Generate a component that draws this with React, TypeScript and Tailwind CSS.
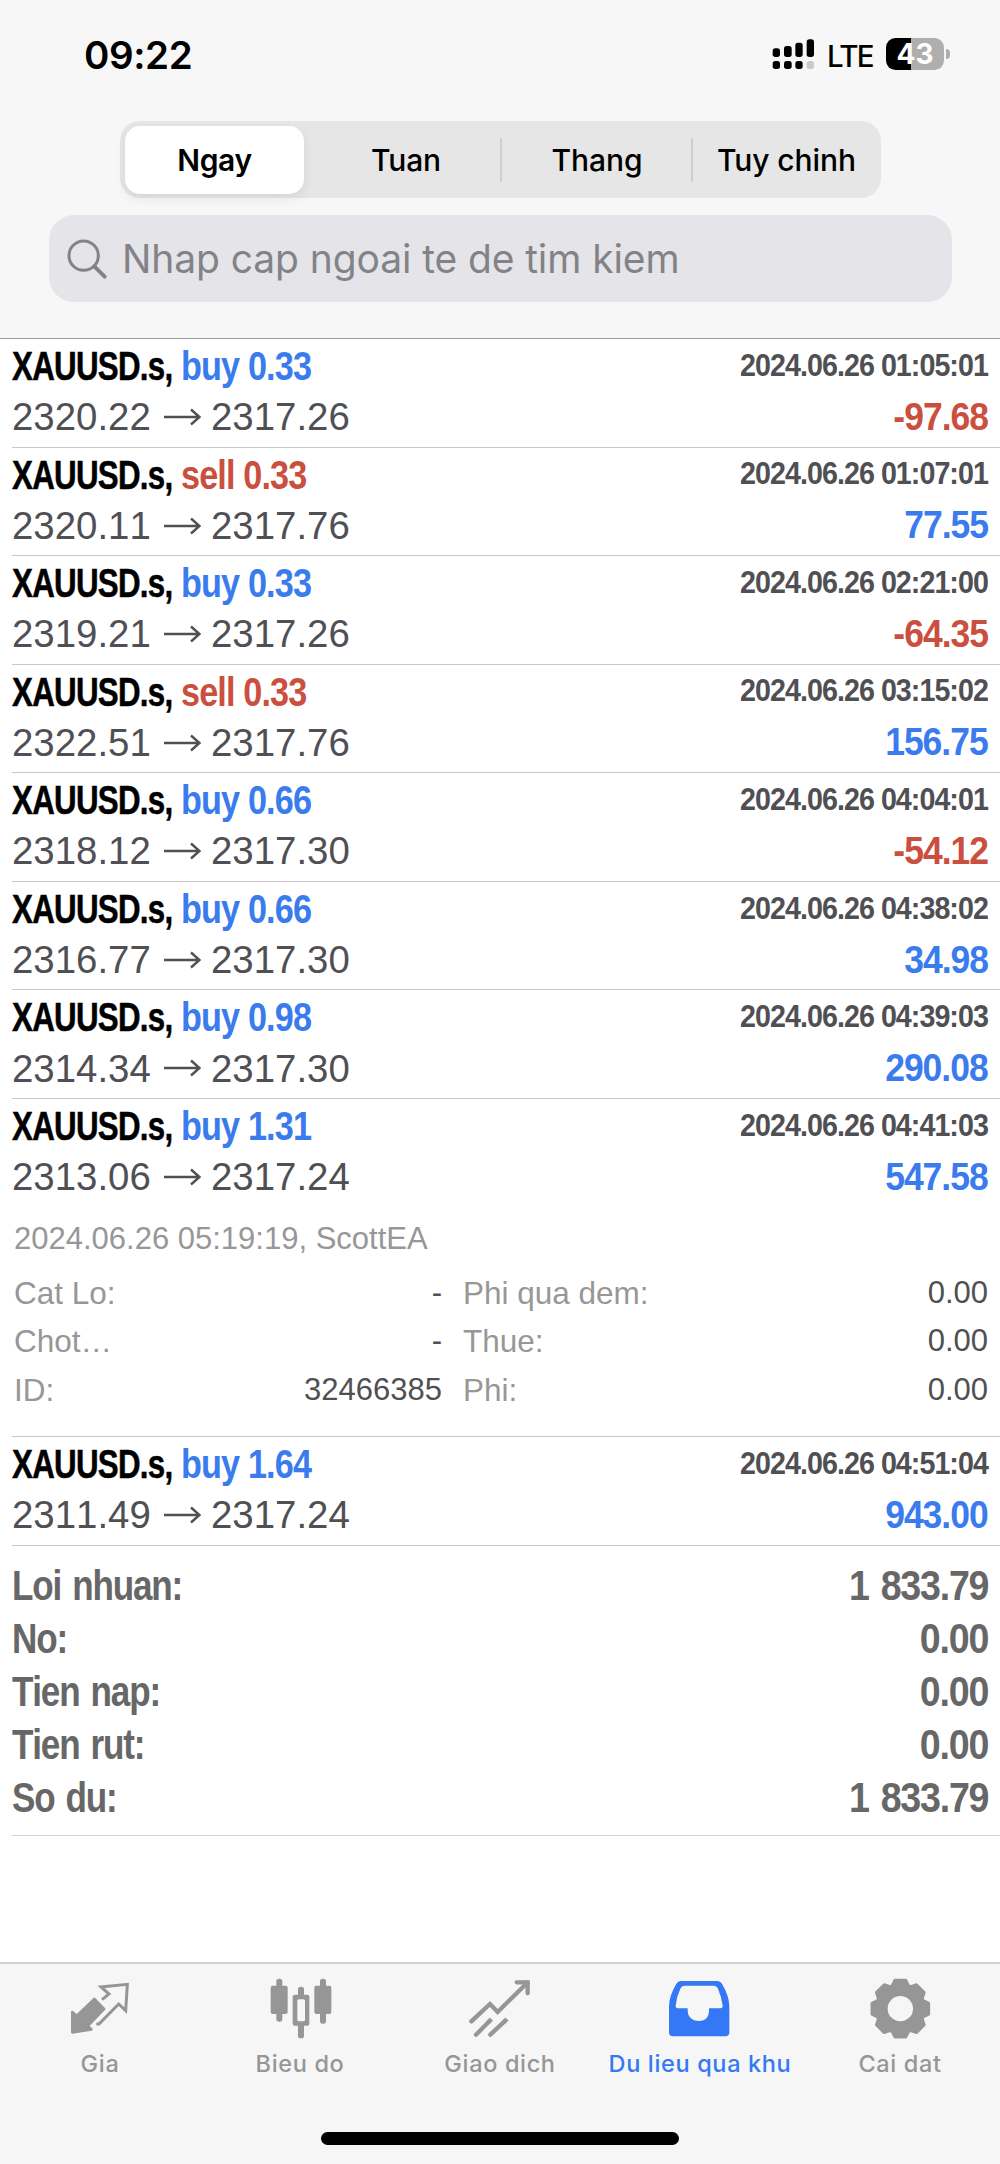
import clsx from "clsx";
import type { ReactNode } from "react";

interface Deal {
  side: "buy" | "sell";
  volume: string;
  open: string;
  close: string;
  time: string;
  profit: string;
  expanded?: boolean;
}

const deals: Deal[] = [
  { side: "buy", volume: "0.33", open: "2320.22", close: "2317.26", time: "2024.06.26 01:05:01", profit: "-97.68" },
  { side: "sell", volume: "0.33", open: "2320.11", close: "2317.76", time: "2024.06.26 01:07:01", profit: "77.55" },
  { side: "buy", volume: "0.33", open: "2319.21", close: "2317.26", time: "2024.06.26 02:21:00", profit: "-64.35" },
  { side: "sell", volume: "0.33", open: "2322.51", close: "2317.76", time: "2024.06.26 03:15:02", profit: "156.75" },
  { side: "buy", volume: "0.66", open: "2318.12", close: "2317.30", time: "2024.06.26 04:04:01", profit: "-54.12" },
  { side: "buy", volume: "0.66", open: "2316.77", close: "2317.30", time: "2024.06.26 04:38:02", profit: "34.98" },
  { side: "buy", volume: "0.98", open: "2314.34", close: "2317.30", time: "2024.06.26 04:39:03", profit: "290.08" },
  { side: "buy", volume: "1.31", open: "2313.06", close: "2317.24", time: "2024.06.26 04:41:03", profit: "547.58", expanded: true },
  { side: "buy", volume: "1.64", open: "2311.49", close: "2317.24", time: "2024.06.26 04:51:04", profit: "943.00" },
];

const details = [
  ["Cat Lo:", "-", "Phi qua dem:", "0.00"],
  ["Chot…", "-", "Thue:", "0.00"],
  ["ID:", "32466385", "Phi:", "0.00"],
];

const totals = [
  ["Loi nhuan:", "1 833.79"],
  ["No:", "0.00"],
  ["Tien nap:", "0.00"],
  ["Tien rut:", "0.00"],
  ["So du:", "1 833.79"],
];

// eight-tooth gear outline around (0, 0)
const gearPoints = Array.from({ length: 8 }, (_, i) =>
  [
    [-20, 73],
    [-11, 87],
    [11, 87],
    [20, 73],
  ].map(([deg, r]) => {
    const a = ((i * 45 + deg) * Math.PI) / 180;
    return `${(Math.sin(a) * r).toFixed(1)},${(-Math.cos(a) * r).toFixed(1)}`;
  })
)
  .flat()
  .join(" ");

function StatusBar() {
  return (
    <div className="flex h-[121px] items-start pl-[84px] pr-[50px]">
      <span className="mt-[31px] text-[38.5px] font-semibold leading-[48px] tracking-[-0.4px] text-black">09:22</span>
      <div className="ml-auto flex">
        <svg className="mt-[38px] h-[33px] w-[43px]" viewBox="814 114 129 99">
          <rect x="816" y="145" width="22" height="26" rx="8" />
          <rect x="850" y="138" width="23" height="33" rx="8" />
          <rect x="884" y="128" width="22" height="43" rx="8" />
          <rect x="918" y="118" width="22" height="53" rx="8" />
          <rect x="816" y="183" width="22" height="24" rx="8" />
          <rect x="850" y="183" width="23" height="24" rx="8" />
          <rect x="884" y="183" width="22" height="24" rx="8" />
          <rect x="918" y="183" width="22" height="24" rx="8" fill="#c9c9c9" />
        </svg>
        <span className="ml-[12px] mt-[36px] w-[59px] text-[29.5px] font-medium leading-[40px] tracking-[-1.7px] text-black">LTE</span>
        <div className="mt-[38px] flex h-[32px] items-center">
          <div className="flex h-[32px] w-[58px] items-center justify-center rounded-[9.5px] bg-linear-to-r from-black from-43% to-[#aeaeae] to-43% text-[28px] font-bold leading-none text-white">
            43
          </div>
          <div className="ml-[2px] h-[10px] w-[4px] rounded-r-full bg-[#aeaeae]" />
        </div>
      </div>
    </div>
  );
}

function PeriodTabs() {
  return (
    <div className="mx-auto flex h-[77px] w-[761px] items-center rounded-[20px] bg-[#e6e6e6] text-[30px] font-medium leading-none tracking-[-0.1px] text-black">
      <div className="ml-[5px] flex h-[68px] w-[179px] items-center justify-center rounded-[15px] bg-white pl-[1px] font-semibold tracking-[-0.4px] shadow-[0_4px_12px_rgba(0,0,0,0.08)]">
        Ngay
      </div>
      <div className="ml-[6px] flex h-[44px] w-[192px] items-center justify-center border-r-2 border-[#cfcfcf] pl-[3px]">Tuan</div>
      <div className="flex h-[44px] w-[191px] items-center justify-center border-r-2 border-[#cfcfcf] pl-[2px]">Thang</div>
      <div className="flex flex-1 items-center justify-center">Tuy chinh</div>
    </div>
  );
}

function SearchField() {
  return (
    <div className="ml-[49px] mr-[48px] mt-[17px] flex h-[87px] items-center rounded-[25px] bg-[#e5e5e9] pl-[17px]">
      <svg className="h-[42px] w-[42px]" viewBox="198 712 126 126" fill="none" stroke="#838387" strokeLinecap="round">
        <circle cx="251" cy="765" r="44" strokeWidth="9" />
        <path d="M283 797L314 828" strokeWidth="12" />
      </svg>
      <span className="ml-[14px] whitespace-nowrap text-[39px] leading-none tracking-[-0.1px] text-[#838387]">
        Nhap cap ngoai te de tim kiem
      </span>
    </div>
  );
}

function Arrow() {
  return (
    <svg className="ml-[12px] mr-[10px] h-[18px] w-[38px]" viewBox="0 0 38 18" fill="none" stroke="#505054" strokeWidth="2.4">
      <path d="M1 9H36M28 1.5L36.5 9L28 16.5" />
    </svg>
  );
}

function DealRow({ deal }: { deal: Deal }) {
  const loss = deal.profit.startsWith("-");
  return (
    <div
      className={clsx(
        "ml-[12px] border-b border-[#c8c8c8] pr-[12px] font-[Liberation_Sans,Arial,sans-serif] [font-kerning:none]",
        deal.expanded ? "h-[338px]" : "h-[108.57px]"
      )}
    >
      <div className="flex h-[53px] items-center whitespace-nowrap pt-[1px] font-bold">
        <span className="w-[169px] origin-left scale-x-[0.782] text-[40px] tracking-[-0.9px] text-black [-webkit-text-stroke:0.5px]">
          XAUUSD.s,
        </span>
        <span
          className={clsx(
            "origin-left scale-x-[0.855] text-[40px] tracking-[-1px]",
            deal.side === "buy" ? "text-[#3a7ced]" : "text-[#cb4f3f]"
          )}
        >
          {deal.side} {deal.volume}
        </span>
        <span className="ml-auto origin-right scale-x-[0.925] text-[31px] tracking-[-1.05px] text-[#505054]">
          {deal.time}
        </span>
      </div>
      <div className="flex h-[49px] items-center pt-[1px]">
        <span className="w-[139px] text-[38.4px] text-[#505054]">{deal.open}</span>
        <Arrow />
        <span className="text-[38.4px] text-[#505054]">{deal.close}</span>
        <span
          className={clsx(
            "ml-auto origin-right scale-x-[0.91] text-[39px] font-bold tracking-[-1.1px]",
            loss ? "text-[#cb4f3f]" : "text-[#3a7ced]"
          )}
        >
          {deal.profit}
        </span>
      </div>
      {deal.expanded && (
        <div className="mt-[11px] pl-[2px] text-[31px] text-[#979797]">
          <div className="mb-[3px] flex h-[54px] items-center">2024.06.26 05:19:19, ScottEA</div>
          {details.map(([leftLabel, leftValue, rightLabel, rightValue]) => (
            <div key={rightLabel} className="flex h-[48.5px] items-center">
              <span className="text-[31.5px]">{leftLabel}</span>
              <span className="ml-auto text-[#505054]">{leftValue}</span>
              <div className="ml-[21px] flex w-[525px] items-center justify-between">
                <span className="text-[31.5px]">{rightLabel}</span>
                <span className="text-[#505054]">{rightValue}</span>
              </div>
            </div>
          ))}
        </div>
      )}
    </div>
  );
}

function Totals() {
  return (
    <div className="ml-[12px] h-[290px] border-b border-[#d4d4d4] pr-[12px] pt-[14px] font-[Liberation_Sans,Arial,sans-serif] text-[42.5px] font-bold tracking-[-1.4px] text-[#676767] [font-kerning:none] [word-spacing:3px]">
      {totals.map(([label, value]) => (
        <div key={label} className="flex h-[53px] items-center justify-between">
          <span className="origin-left scale-x-[0.825]">{label}</span>
          <span className="origin-right scale-x-[0.885]">{value}</span>
        </div>
      ))}
    </div>
  );
}

function NavItem({ label, active, children }: { label: string; active?: boolean; children: ReactNode }) {
  return (
    <div className={clsx("flex w-1/5 flex-col items-center", active ? "text-[#3478f6]" : "text-[#969696]")}>
      <svg className="mt-[14px] h-[62px] w-[64px] overflow-visible" viewBox="-96 -93 192 186" fill="currentColor">
        {children}
      </svg>
      <span className="mt-[9px] whitespace-nowrap text-[23.5px] font-medium leading-[30px] tracking-[0.65px]">{label}</span>
    </div>
  );
}

function BottomNav() {
  return (
    <div className="mt-auto h-[202px] border-t-2 border-[#d2d2d3] bg-[#f6f6f6]">
      <div className="flex h-[168px]">
        <NavItem label="Gia">
          <g transform="translate(-300 -178)">
            <path
              d="M283 148L312 178L263 229L274 239L217 248V187L230 199Z"
              stroke="currentColor"
              strokeWidth="8"
              strokeLinejoin="round"
            />
            <path d="M306 150L327 133L303 112L382 104L377 183L356 163L297 223H289" fill="none" stroke="currentColor" strokeWidth="9" />
          </g>
        </NavItem>
        <NavItem label="Bieu do">
          <g transform="translate(-899 -178)">
            <rect x="811" y="108" width="51" height="85" rx="6" />
            <rect x="828" y="87" width="18" height="129" rx="8" />
            <rect x="893" y="111" width="18" height="155" rx="8" />
            <rect x="877" y="135" width="50" height="93" rx="6" />
            <rect x="891" y="149" width="23" height="66" rx="5" fill="#f6f6f6" />
            <rect x="942" y="108" width="51" height="85" rx="6" />
            <rect x="959" y="87" width="18" height="135" rx="8" />
          </g>
        </NavItem>
        <NavItem label="Giao dich">
          <g transform="translate(-300 -178)" fill="none" stroke="currentColor" strokeWidth="13" strokeLinecap="round">
            <path d="M214 215L270 163L293 187L382 99" strokeLinejoin="miter" />
            <path d="M350 98H383V131" />
            <path d="M228 255L268 215M271 255L315 214" />
            <path d="M265 218L274 208M311 218L321 208" strokeLinecap="butt" />
          </g>
        </NavItem>
        <NavItem label="Du lieu qua khu" active>
          <path
            transform="translate(-2098 -178)"
            fillRule="evenodd"
            d="M2041 94H2150Q2159 94 2164 102Q2186 140 2186 170V248Q2186 260 2174 260H2017Q2005 260 2005 248V170Q2005 140 2027 102Q2032 94 2041 94ZM2053 108Q2043 108 2039 117Q2028 140 2025 168Q2024 176 2032 176H2061V182C2061 202 2074 214 2095 214S2125 202 2125 182V176H2159Q2167 176 2166 168Q2162 140 2152 117Q2148 108 2138 108Z"
          />
        </NavItem>
        <NavItem label="Cai dat">
          <g transform="translate(1 -1)">
            <polygon points={gearPoints} stroke="currentColor" strokeWidth="8" strokeLinejoin="round" />
            <circle r="38" fill="#f6f6f6" />
          </g>
        </NavItem>
      </div>
      <div className="mx-auto h-[13px] w-[358px] rounded-full bg-black" />
    </div>
  );
}

export default function App() {
  return (
    <div className="flex h-[2164px] w-[1000px] flex-col overflow-hidden bg-white font-[Inter,sans-serif]">
      <header className="h-[339px] border-b border-[#9c9c9c] bg-[#f7f7f7]">
        <StatusBar />
        <PeriodTabs />
        <SearchField />
      </header>
      <main>
        {deals.map((deal) => (
          <DealRow key={deal.time} deal={deal} />
        ))}
        <Totals />
      </main>
      <BottomNav />
    </div>
  );
}
